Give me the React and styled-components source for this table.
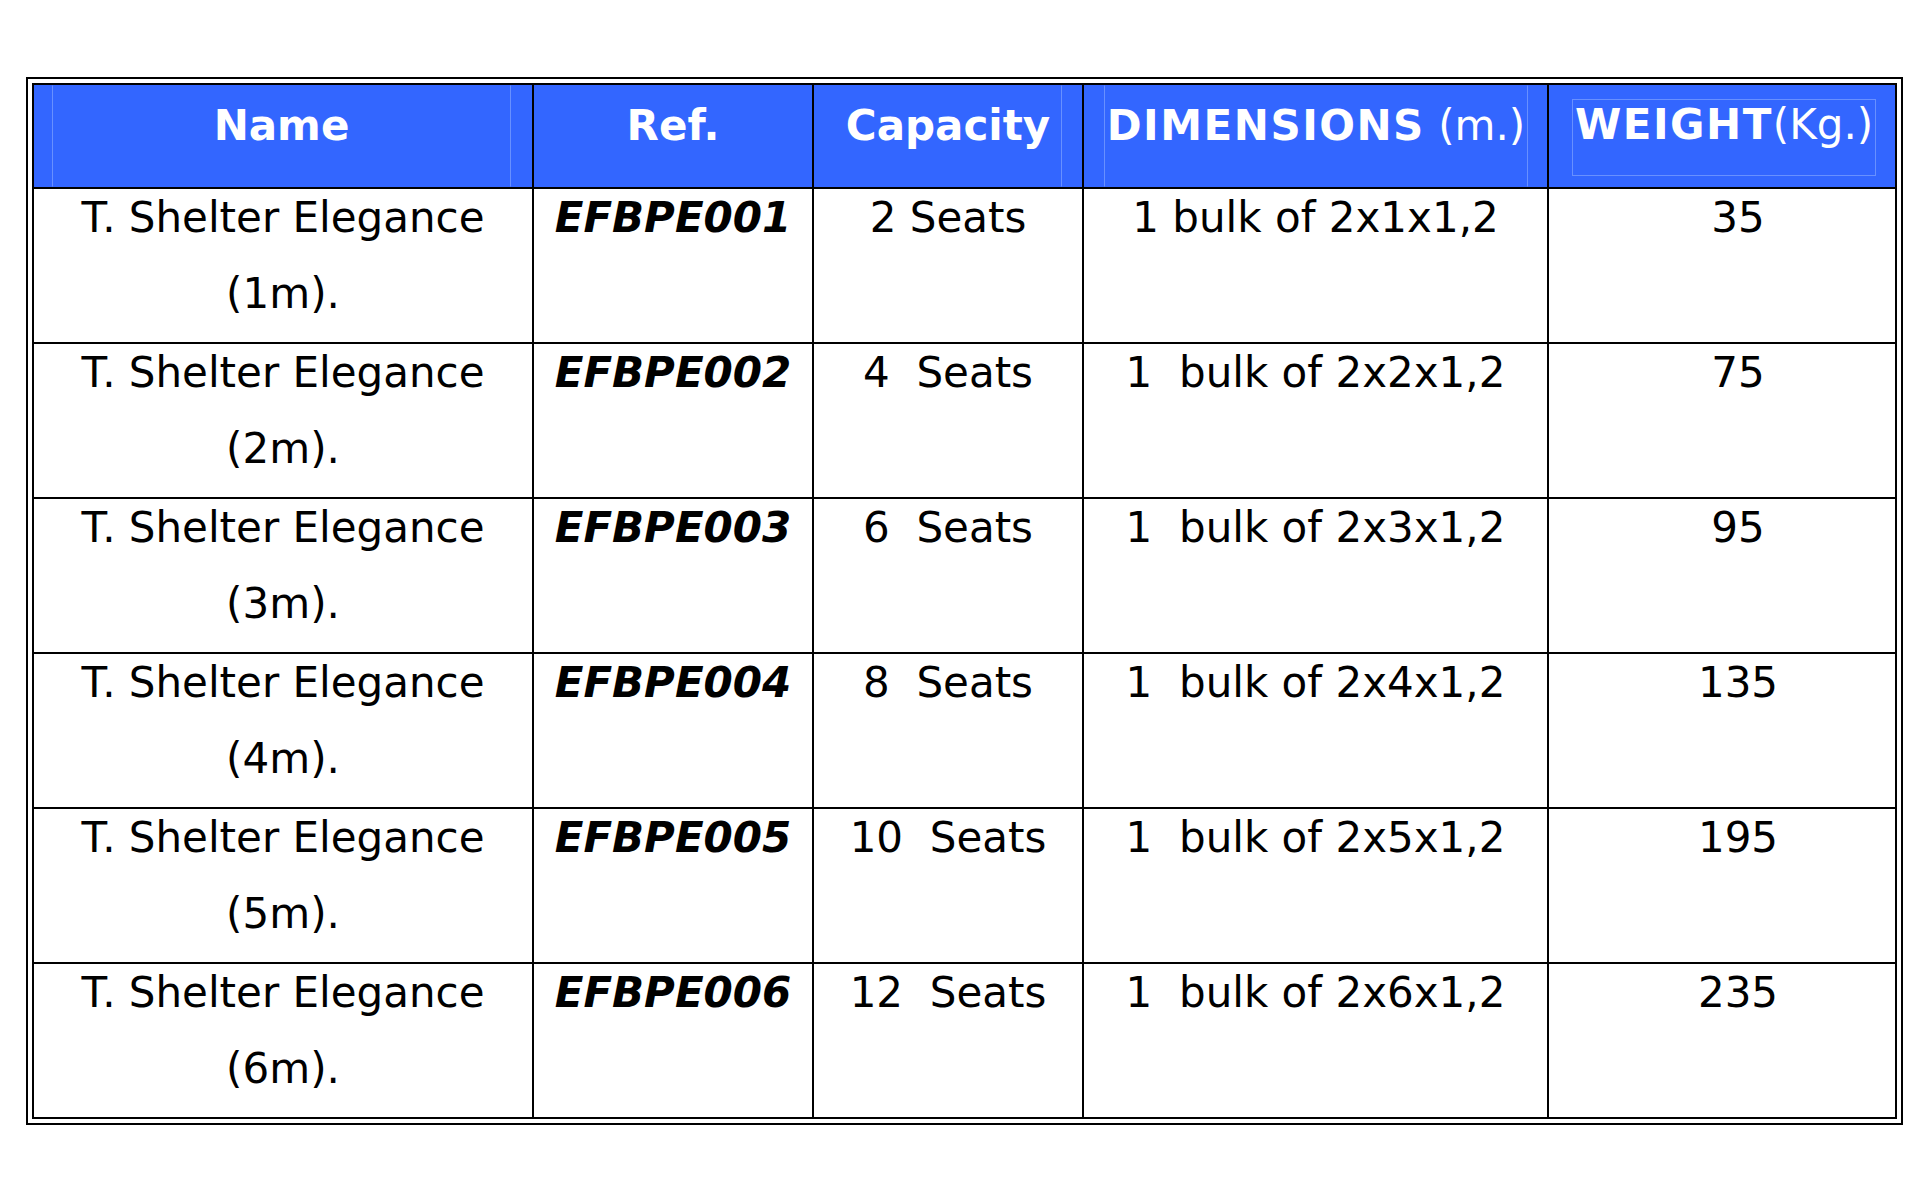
import styled, { createGlobalStyle } from "styled-components"

const GlobalStyle = createGlobalStyle`
  body {
    margin: 0;
    background: #ffffff;
  }
`;

const Page = styled.div`
  padding: 77px 0 0 26px;
  font-family: "DejaVu Sans", Verdana, sans-serif;
`;

const Frame = styled.div`
  display: inline-block;
  border: 2px solid #000;
  padding: 4px;
`;

const Table = styled.table`
  border-collapse: collapse;
  table-layout: fixed;
  width: 1863px;
`;

const HeadRow = styled.tr`
  height: 104px;
`;

const BodyRow = styled.tr`
  height: 155px;
`;

const Th = styled.th`
  border: 2px solid #000;
  background: #3366ff;
  color: #fff;
  padding: 0;
  vertical-align: top;
  font-size: 42px;
  font-weight: 700;
`;

const HeadBox = styled.div`
  height: ${p => p.$h || 102}px;
  margin: ${p => p.$top || 0}px ${p => p.$right || 0}px 0 ${p => p.$left || 0}px;
  padding-top: ${p => p.$pad ?? 15}px;
  box-sizing: border-box;
  border-left: 1px solid ${p => (p.$lines && p.$lines.includes("l") ? "#6890ff" : "transparent")};
  border-right: 1px solid ${p => (p.$lines && p.$lines.includes("r") ? "#6890ff" : "transparent")};
  border-top: 1px solid ${p => (p.$lines && p.$lines.includes("t") ? "#6890ff" : "transparent")};
  border-bottom: 1px solid ${p => (p.$lines && p.$lines.includes("b") ? "#6890ff" : "transparent")};
  text-align: center;
  white-space: nowrap;
`;

const Caps = styled.span`
  letter-spacing: 1.5px;
`;

const Light = styled.span`
  font-weight: 400;
`;

const Td = styled.td`
  border: 2px solid #000;
  padding: 0 ${p => p.$padRight || 0}px 0 ${p => p.$padLeft || 0}px;
  vertical-align: top;
  text-align: center;
  font-size: 42px;
  color: #000;
  font-weight: ${p => (p.$ref ? 700 : 400)};
  font-style: ${p => (p.$ref ? "italic" : "normal")};
`;

const CellText = styled.div`
  line-height: 76px;
  margin-top: -9px;
`;

const rows = [
  ["T. Shelter Elegance (1m).", "EFBPE001", "2 Seats", "1 bulk of 2x1x1,2", "35"],
  ["T. Shelter Elegance (2m).", "EFBPE002", "4\u00a0 Seats", "1\u00a0 bulk of 2x2x1,2", "75"],
  ["T. Shelter Elegance (3m).", "EFBPE003", "6\u00a0 Seats", "1\u00a0 bulk of 2x3x1,2", "95"],
  ["T. Shelter Elegance (4m).", "EFBPE004", "8\u00a0 Seats", "1\u00a0 bulk of 2x4x1,2", "135"],
  ["T. Shelter Elegance (5m).", "EFBPE005", "10\u00a0 Seats", "1\u00a0 bulk of 2x5x1,2", "195"],
  ["T. Shelter Elegance (6m).", "EFBPE006", "12\u00a0 Seats", "1\u00a0 bulk of 2x6x1,2", "235"],
];

const App = () => {
  return (
    <Page>
      <GlobalStyle />
      <Frame>
        <Table>
          <colgroup>
            <col style={{ width: 500 }} />
            <col style={{ width: 280 }} />
            <col style={{ width: 270 }} />
            <col style={{ width: 465 }} />
            <col style={{ width: 348 }} />
          </colgroup>
          <thead>
            <HeadRow>
              <Th>
                <HeadBox $left={18} $right={21} $lines="lr">Name</HeadBox>
              </Th>
              <Th>
                <HeadBox>Ref.</HeadBox>
              </Th>
              <Th>
                <HeadBox $left={20} $right={20} $lines="r">Capacity</HeadBox>
              </Th>
              <Th>
                <HeadBox $left={20} $right={19} $lines="lr">
                  <Caps>DIMENSIONS</Caps><Light> (m.)</Light>
                </HeadBox>
              </Th>
              <Th>
                <HeadBox $left={23} $right={19} $top={14} $h={77} $pad={0} $lines="lrtb">
                  <Caps>WEIGHT</Caps><Light>(Kg.)</Light>
                </HeadBox>
              </Th>
            </HeadRow>
          </thead>
          <tbody>
            {rows.map(r => (
              <BodyRow key={r[1]}>
                <Td><CellText>{r[0]}</CellText></Td>
                <Td $ref><CellText>{r[1]}</CellText></Td>
                <Td><CellText>{r[2]}</CellText></Td>
                <Td><CellText>{r[3]}</CellText></Td>
                <Td $padLeft={32}><CellText>{r[4]}</CellText></Td>
              </BodyRow>
            ))}
          </tbody>
        </Table>
      </Frame>
    </Page>
  )
}

export default App
